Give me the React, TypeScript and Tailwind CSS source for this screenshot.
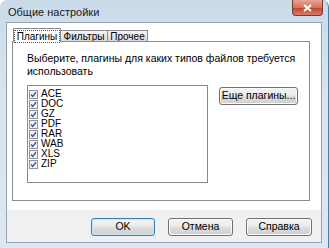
import clsx from "clsx";

const plugins = ["ACE", "DOC", "GZ", "PDF", "RAR", "WAB", "XLS", "ZIP"];

function CheckBox() {
  return (
    <svg width="9" height="9" viewBox="0 0 9 9" className="shrink-0">
      <rect x="0.5" y="0.5" width="8" height="8" fill="#f1f3f6" stroke="#8f9398" />
      <path d="M2 4.6 L3.7 6.4 L7 2.2" fill="none" stroke="#3a55a0" strokeWidth="1.4" />
    </svg>
  );
}

function Button({ children, def, className }: { children: React.ReactNode; def?: boolean; className?: string }) {
  return (
    <div
      className={clsx(
        "flex h-[18px] items-center justify-center whitespace-nowrap rounded-[3px] border text-[10.5px] text-black bg-[linear-gradient(#f3f3f3,#ececec_45%,#dedede_50%,#d0d0d0)]",
        def ? "border-[#3c7fb1] shadow-[inset_0_0_0_1px_#c6e6f8]" : "border-[#707070] shadow-[inset_0_0_0_1px_#fbfbfb]",
        className
      )}
    >
      {children}
    </div>
  );
}

export default function App() {
  return (
    <div
      className="flex h-[248px] w-[329px] flex-col rounded-t-[7px] border-r border-[#4d7fa1] bg-[linear-gradient(#c9dae9,#d6e3ef_30%,#dce7f1)]"
      style={{ fontFamily: '"Liberation Sans", Arial, sans-serif' }}
    >
      {/* Title bar */}
      <div className="flex h-[22px] shrink-0 items-start">
        <span className="pl-[8px] pt-[4px] text-[11px] text-[#1a1a1a]">Общие настройки</span>
        <div className="ml-auto mr-[5px] flex h-[16px] w-[31px] items-center justify-center rounded-b-[4px] border border-t-0 border-[#7a3a32] bg-[linear-gradient(#e8a493,#d4735e_50%,#c3462e_55%,#d2806a)]">
          <svg width="9" height="8" viewBox="0 0 9 8">
            <path d="M1 1 L8 7 M8 1 L1 7" stroke="#fff" strokeWidth="2" />
          </svg>
        </div>
      </div>

      {/* Client area */}
      <div className="mx-[6px] mb-[5px] flex flex-1 flex-col border border-[#95a3b2] bg-white">
        <div className="flex flex-1 flex-col pb-[9px] pl-[5px] pr-[11px] pt-[5px]">
          {/* Tabs */}
          <div className="flex h-[13px] items-end text-[10px] text-black">
            <div className="relative z-10 -mb-px ml-px flex h-[14px] w-[48px] items-start justify-center border border-b-0 border-[#898c95] bg-white pt-px">
              <span className="border border-dotted border-[#555] px-[2px] leading-[11px]">Плагины</span>
            </div>
            <div className="flex h-[11px] w-[47px] items-center justify-center border border-b-0 border-l-0 border-[#898c95] bg-[linear-gradient(#f4f4f4,#e6e6e6_50%,#dadada)] leading-[11px]">
              Фильтры
            </div>
            <div className="flex h-[11px] w-[40px] items-center justify-center border border-b-0 border-l-0 border-[#898c95] bg-[linear-gradient(#f4f4f4,#e6e6e6_50%,#dadada)] leading-[11px]">
              Прочее
            </div>
          </div>

          {/* Panel */}
          <div className="flex flex-1 flex-col border border-[#898c95] bg-white pl-[14px] pt-[10px] text-[10.5px] text-black">
            <p className="leading-[13px]">
              Выберите, плагины для каких типов файлов требуется
              <br />
              использовать
            </p>
            <div className="mt-[7px] flex items-start">
              <div className="h-[98px] w-[181px] border border-[#828790] pl-[1px] pt-[3px] text-[10px]">
                {plugins.map((p) => (
                  <div key={p} className="flex h-[10px] items-center gap-[3px]">
                    <CheckBox />
                    <span className="leading-[10px]">{p}</span>
                  </div>
                ))}
              </div>
              <Button className="ml-[11px] mt-[2px] w-[79px]">Еще плагины...</Button>
            </div>
          </div>
        </div>

        {/* Bottom button bar */}
        <div className="flex h-[32px] shrink-0 items-start justify-end gap-[13px] bg-[#f0f0f0] pr-[9px] pt-[8px]">
          <Button def className="w-[64px]">OK</Button>
          <Button className="w-[65px]">Отмена</Button>
          <Button className="w-[66px]">Справка</Button>
        </div>
      </div>
    </div>
  );
}
